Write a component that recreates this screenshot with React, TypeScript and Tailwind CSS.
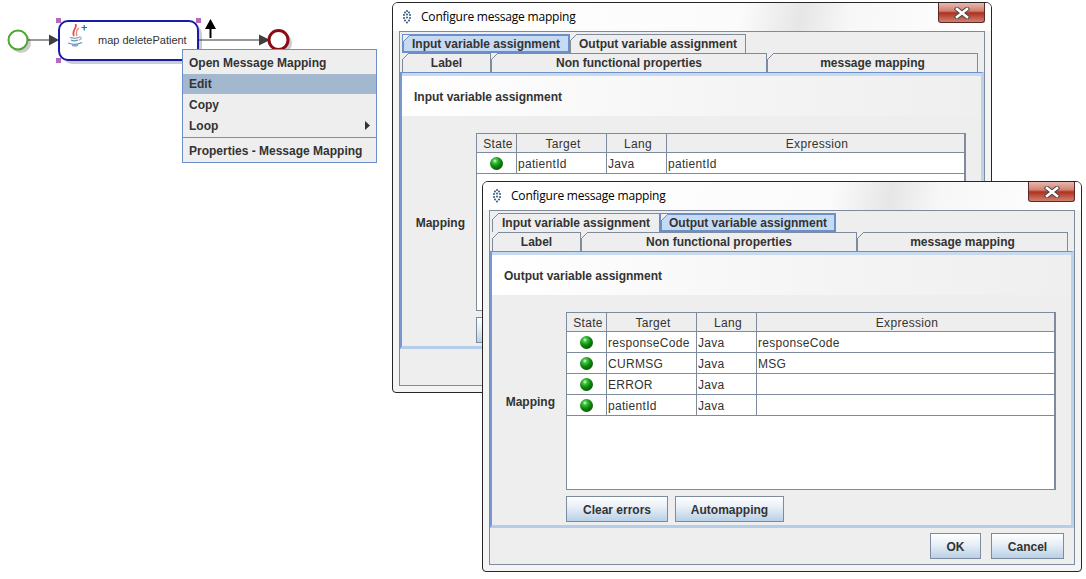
const FONT = "font-['Liberation_Sans',Arial,sans-serif]";

type Row = { target: string; expression: string };

function Tab({
  label,
  width,
  selected = false,
}: {
  label: string;
  width: string;
  selected?: boolean;
}) {
  return (
    <div
      className={`relative flex h-full items-center justify-center border-x border-t text-xs font-bold text-[#333] ${width} ${
        selected ? "border-[#6d8fc9] border-b-2 border-x-2 border-t-2 bg-[#c6dbf3]" : "border-[#7d8b9c] bg-[#eeeeee]"
      }`}
    >
      <svg className="absolute -left-px -top-px h-[7px] w-[7px]" viewBox="0 0 7 7">
        <path d="M0 0H7L0 7Z" fill="#eeeeee" />
        <path d="M0 7L7 0" stroke={selected ? "#6d8fc9" : "#7d8b9c"} strokeWidth="1" />
      </svg>
      {label}
    </div>
  );
}

function Ball() {
  return (
    <span className="h-[13px] w-[13px] rounded-full bg-[radial-gradient(circle_at_38%_30%,#d8ffd8_0%,#3fc23f_18%,#0f8a0f_45%,#065c06_75%,#032f03_100%)]" />
  );
}

function Button({ label, width }: { label?: string; width: string }) {
  return (
    <div
      className={`flex h-[26px] items-center justify-center border border-[#7d8b9c] bg-[linear-gradient(#ffffff,#e6eef6_45%,#b9d0e6)] pt-[2px] text-xs font-bold text-[#333] ${width}`}
    >
      {label}
    </div>
  );
}

function MappingTable({ rows }: { rows: Row[] }) {
  const cols = "grid grid-cols-[40px_90px_60px_1fr]";
  return (
    <div className="h-[178px] w-[490px] border-l border-b border-t border-r-2 border-[#7d8b9c] bg-white text-xs tracking-[0.3px] text-[#333]">
      <div className={`${cols} h-[19px] border-b border-[#7d8b9c] bg-[#eeeeee] text-center`}>
        <div className="border-r border-[#7d8b9c] pl-[3px] leading-[20px]">State</div>
        <div className="border-r border-[#7d8b9c] pl-[3px] leading-[20px]">Target</div>
        <div className="border-r border-[#7d8b9c] pl-[3px] leading-[20px]">Lang</div>
        <div className="pl-[3px] leading-[20px]">Expression</div>
      </div>
      {rows.map((row) => (
        <div key={row.target} className={`${cols} h-[21px] border-b border-[#7d8b9c]`}>
          <div className="flex h-[20px] items-center justify-center border-r border-[#7d8b9c]">
            <Ball />
          </div>
          <div className="h-[20px] border-r border-[#7d8b9c] pl-px pt-px leading-[21px]">{row.target}</div>
          <div className="h-[20px] border-r border-[#7d8b9c] pl-px pt-px leading-[21px]">Java</div>
          <div className="h-[20px] pl-px pt-px leading-[21px]">{row.expression}</div>
        </div>
      ))}
    </div>
  );
}

function Dialog({
  pos,
  active,
  rows,
  covered = false,
}: {
  pos: string;
  active: "input" | "output";
  rows: Row[];
  covered?: boolean;
}) {
  const heading = active === "input" ? "Input variable assignment" : "Output variable assignment";
  return (
    <div
      className={`absolute flex h-[391px] w-[600px] flex-col overflow-hidden rounded-t-[6px] rounded-b-[4px] border border-[#262626] bg-[#f4f4f4] ${FONT} ${pos}`}
    >
      {/* Title bar */}
      <div className="flex h-[28px] shrink-0 items-start justify-between bg-[linear-gradient(102deg,#ffffff_0%,#fbfbfb_58%,#e6e6e6_68%,#f7f7f7_76%,#ffffff_100%)] pr-[6px]">
        <div className="flex h-[27px] items-center pl-[9px]">
          <svg width="10" height="14" viewBox="0 0 10 14" className="mr-[9px]">
            {[
              [5, 1],
              [3, 2.5],
              [7, 2.5],
              [2, 5],
              [5, 4.5],
              [8, 5],
              [2, 8],
              [5, 7.5],
              [8, 8],
              [3, 10.5],
              [7, 10.5],
              [5, 12.5],
            ].map(([cx, cy]) => (
              <circle key={`${cx}-${cy}`} cx={cx} cy={cy} r="1" fill="#2f5680" />
            ))}
          </svg>
          <span className="font-['Open_Sans',sans-serif] text-xs tracking-[-0.2px] text-black">
            Configure message mapping
          </span>
        </div>
        <div className="flex h-[20px] w-[47px] items-center justify-center rounded-b-[3px] border border-t-0 border-[#5b2a28] bg-[linear-gradient(#e8b8b0,#d2806f_42%,#ad3020_52%,#c4604e_80%,#d08070)]">
          <svg width="16" height="12" viewBox="0 0 16 12">
            <path d="M3 2L13 10M13 2L3 10" stroke="#4a4a4a" strokeWidth="4.5" strokeLinecap="square" />
            <path d="M3 2L13 10M13 2L3 10" stroke="#ffffff" strokeWidth="2.6" strokeLinecap="square" />
          </svg>
        </div>
      </div>

      {/* Content frame */}
      <div className="mx-[6px] mb-[6px] flex flex-1 flex-col border border-[#7d8b9c] bg-[#eeeeee]">
        <div className="mt-[2px] flex h-[19px] pl-[2px]">
          <Tab label="Input variable assignment" width="w-[168px]" selected={active === "input"} />
          <Tab label="Output variable assignment" width="w-[176px]" selected={active === "output"} />
        </div>
        <div className="flex h-[19px] pl-[2px]">
          <Tab label="Label" width="w-[89px]" />
          <Tab label="Non functional properties" width="w-[276px]" />
          <Tab label="message mapping" width="w-[211px]" />
        </div>

        {/* Selected tab panel */}
        <div className="h-[277px] border-b-[3px] border-l-2 border-r-[3px] border-t border-b-[#b5cde8] border-l-[#7a98d0] border-r-[#bcd3ea] border-t-[#6d8fc9] bg-[#eeeeee]">
          <div className="h-[3px] bg-[#c8daf0]" />
          <div className="flex h-[40px] items-center bg-[linear-gradient(90deg,#ffffff,#f4f4f4_60%,#efefef)] pl-[12px] pt-[2px] text-xs font-bold text-[#333]">
            {heading}
          </div>
          <div className="flex pt-[17px]">
            <div className="flex h-[178px] w-[74px] items-center justify-end pr-[11px] pt-[2px] text-xs font-bold text-[#333]">
              Mapping
            </div>
            <div className="flex flex-col gap-[6px]">
              <MappingTable rows={rows} />
              <div className="flex gap-[7px]">
                <Button label={covered ? undefined : "Clear errors"} width="w-[102px]" />
                <Button label={covered ? undefined : "Automapping"} width="w-[109px]" />
              </div>
            </div>
          </div>
        </div>

        {/* Footer */}
        <div className="flex flex-1 items-center justify-end gap-[10px] pr-[10px]">
          <Button label={covered ? undefined : "OK"} width="w-[51px]" />
          <Button label={covered ? undefined : "Cancel"} width="w-[73px]" />
        </div>
      </div>
    </div>
  );
}

function Diagram() {
  return (
    <>
      <svg className="absolute left-0 top-0" width="300" height="70" viewBox="0 0 300 70">
        {/* shadows */}
        <circle cx="21" cy="43" r="10" fill="#cccccc" />
        <circle cx="282" cy="43" r="10" fill="#cccccc" />
        <rect x="62" y="24" width="140" height="40" rx="10" fill="#cccccc" />
        {/* connectors */}
        <circle cx="18" cy="40" r="9.5" fill="#ffffff" stroke="#4ea72e" strokeWidth="2" />
        <path d="M28 40H50" stroke="#333333" strokeWidth="1" />
        <path d="M49 34.5L59 40L49 45.5Z" fill="#404040" />
        <path d="M199 40H260" stroke="#333333" strokeWidth="1" />
        <path d="M259 34.5L270 40L259 45.5Z" fill="#404040" />
        <circle cx="278.5" cy="40" r="9.5" fill="#ffffff" stroke="#8b0b14" strokeWidth="3" />
        {/* up arrow */}
        <path d="M210.5 38V25" stroke="#000000" strokeWidth="2" />
        <path d="M205 29L210.5 19L216 29Z" fill="#000000" />
      </svg>

      {/* Task node */}
      <div
        className={`absolute left-[58px] top-[20px] flex h-[41px] w-[141px] items-center rounded-[10px] border-2 border-[#1a1aa8] bg-white pl-[38px] text-[11px] text-[#333] ${FONT}`}
      >
        map deletePatient
        <svg className="absolute left-[6px] top-[2px]" width="22" height="23" viewBox="0 0 22 23">
          <path d="M9.5 0C12 4 5 6 8 12" fill="none" stroke="#d9564a" strokeWidth="1.8" />
          <path d="M13 4C10 6 10 9 11 12" fill="none" stroke="#e58a7e" strokeWidth="1.4" />
          <path d="M4 13.5C7 14.5 10 14.5 13 13.5M5 16C7 17 10 17 12 16M2 19C6 20.5 12 20.5 16 18.5M6 21.5C8 22 10 22 12 21.5" fill="none" stroke="#5f93b8" strokeWidth="1.2" />
          <path d="M13 13C16 12.5 16 15.5 13 16" fill="none" stroke="#5f93b8" strokeWidth="1" />
          <path d="M15.5 3.5H21M18.2 1V6.5" stroke="#1f6fa8" strokeWidth="1.2" />
        </svg>
      </div>
      <span className="absolute left-[56px] top-[18px] h-[5px] w-[5px] bg-[#b768c0]" />
      <span className="absolute left-[196px] top-[18px] h-[5px] w-[5px] bg-[#b768c0]" />
      <span className="absolute left-[56px] top-[58px] h-[5px] w-[5px] bg-[#b768c0]" />

      {/* Context menu */}
      <div
        className={`absolute left-[182px] top-[49px] w-[195px] border border-[#6d8fc9] bg-[#eeeeee] text-xs font-bold text-[#333] ${FONT}`}
      >
        <div className="flex h-[24px] items-center pl-[6px] pt-[2px]">Open Message Mapping</div>
        <div className="flex h-[20px] items-center bg-[#a3b8cf] pl-[6px]">Edit</div>
        <div className="flex h-[21px] items-center pl-[6px]">Copy</div>
        <div className="flex h-[21px] items-center justify-between pl-[6px]">
          Loop
          <svg width="5" height="9" viewBox="0 0 5 9" className="mr-[6px]">
            <path d="M0 0L5 4.5L0 9Z" fill="#333333" />
          </svg>
        </div>
        <div className="mt-[1px] flex h-[25px] items-center border-t border-[#6d8fc9] pl-[6px] pt-[2px]">
          Properties - Message Mapping
        </div>
      </div>
    </>
  );
}

export default function App() {
  return (
    <div className="relative h-[579px] w-[1086px] overflow-hidden bg-white">
      <Diagram />
      <Dialog
        pos="left-[392px] top-[2px]"
        active="input"
        covered
        rows={[{ target: "patientId", expression: "patientId" }]}
      />
      <Dialog
        pos="left-[482px] top-[181px]"
        active="output"
        rows={[
          { target: "responseCode", expression: "responseCode" },
          { target: "CURMSG", expression: "MSG" },
          { target: "ERROR", expression: "" },
          { target: "patientId", expression: "" },
        ]}
      />
    </div>
  );
}
